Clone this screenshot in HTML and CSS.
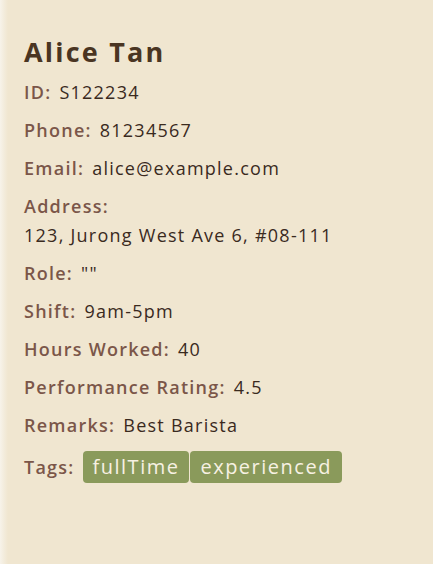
FILE: index.html
```html
<!DOCTYPE html>
<html>
<head>
<meta charset="utf-8">
<link rel="stylesheet" href="styles.css">
</head>
<body>
<div class="panel">
  <h1 class="name">Alice Tan</h1>
  <div class="row"><span class="label">ID:</span><span class="value">S122234</span></div>
  <div class="row"><span class="label">Phone:</span><span class="value">81234567</span></div>
  <div class="row"><span class="label">Email:</span><span class="value">alice@example.com</span></div>
  <div class="row stack"><span class="label">Address:</span><span class="value">123, Jurong West Ave 6, #08-111</span></div>
  <div class="row"><span class="label">Role:</span><span class="value">""</span></div>
  <div class="row"><span class="label">Shift:</span><span class="value">9am-5pm</span></div>
  <div class="row"><span class="label">Hours Worked:</span><span class="value">40</span></div>
  <div class="row"><span class="label">Performance Rating:</span><span class="value">4.5</span></div>
  <div class="row"><span class="label">Remarks:</span><span class="value">Best Barista</span></div>
  <div class="row tags-row"><span class="label">Tags:</span>
    <div class="tags"><span class="tag">fullTime</span><span class="tag">experienced</span></div>
  </div>
</div>
</body>
</html>
```

FILE: styles.css
```css
html, body {
  margin: 0;
  padding: 0;
  height: 100%;
}
body {
  background: #f0e6d0;
  font-family: "Open Sans", "Liberation Sans", sans-serif;
}
.panel {
  min-height: 100%;
  box-sizing: border-box;
  padding: 34px 16px 20px 24px;
  background: linear-gradient(to right, #f7f3ea 0, #f3ecdc 4px, #f0e6d0 8px);
  display: flex;
  flex-direction: column;
}
.name {
  margin: 0 0 10px 0;
  font-size: 27px;
  font-weight: 700;
  color: #4a3522;
  line-height: 36px;
  letter-spacing: 2.2px;
}
.row {
  display: flex;
  align-items: baseline;
  gap: 8px;
  font-size: 18px;
  line-height: 24px;
  margin-bottom: 14px;
  letter-spacing: 1.25px;
}
.row.stack {
  flex-direction: column;
  align-items: flex-start;
  gap: 5px;
}
.label {
  color: #7b5649;
  font-weight: 600;
}
.value {
  color: #3a2a1e;
}
.tags-row {
  align-items: center;
  margin-top: 0;
}
.tags {
  display: flex;
  gap: 1px;
}
.tag {
  background: #8a9a5b;
  color: #f7f1e3;
  font-size: 20px;
  line-height: 32px;
  padding: 0 10px;
  border-radius: 4px;
  letter-spacing: 1.5px;
}
```
